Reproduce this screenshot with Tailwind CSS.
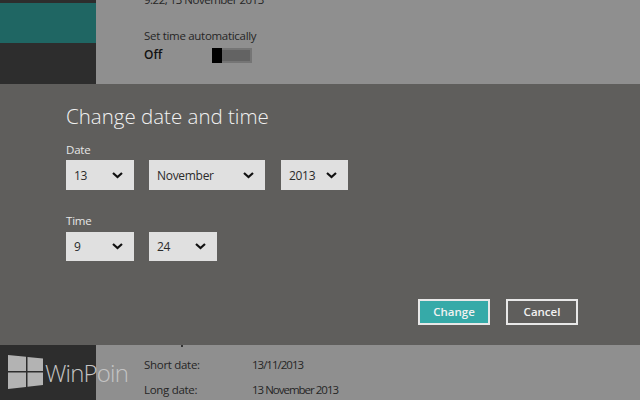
<!DOCTYPE html>
<html lang="en">
<head>
  <meta charset="UTF-8" />
  <title>Change date and time</title>
  <script src="https://cdn.jsdelivr.net/npm/@tailwindcss/browser@4"></script>
</head>
<body class="w-[640px] h-[400px] overflow-hidden bg-[#8f8f8f] font-['Open_Sans',sans-serif]">
  <!-- Settings page behind the dialog -->
  <div class="flex h-[84px]">
    <div class="w-[96px] bg-[#2d2d2d] pt-[3px]">
      <div class="h-[40px] bg-[#1f6663]"></div>
    </div>
    <div class="pl-[48px] text-[#262626] text-[11.5px] tracking-[-0.3px]">
      <p class="h-[30px] -mt-[8px] leading-[16px] tracking-[-0.5px]">9.22, 13 November 2013</p>
      <p class="mt-[6px] leading-[16px]">Set time automatically</p>
      <div class="flex items-center mt-[3px]">
        <span class="w-[68px] text-[12px] tracking-normal leading-[16px] font-semibold text-[#111]">Off</span>
        <div class="flex w-[40px] h-[15px] border-2 border-[#757575] bg-[#636363]">
          <div class="w-[10px] -m-[2px] h-[15px] shrink-0 bg-black"></div>
        </div>
      </div>
    </div>
  </div>

  <!-- Dialog -->
  <div class="h-[261px] bg-[#5f5e5c] pl-[66px] pr-[62px] pt-[19px] flex flex-col">
    <h1 class="text-[20.5px] leading-[26px] font-light text-[#f2f2f2]">Change date and time</h1>
    <p class="mt-[13px] text-[11.5px] tracking-[-0.2px] leading-[16px] text-[#e6e6e6]">Date</p>
    <div class="flex mt-[2px]">
      <div class="flex items-center justify-between w-[68px] h-[30px] pt-px pl-[8px] pr-[11px] bg-[#e0e0e0] text-[12px] tracking-[-0.3px] text-[#2b2b2b]">
        <span>13</span>
        <svg width="11" height="7" viewBox="0 0 11 7" fill="none" stroke="#111" stroke-width="2.2"><path d="M1 1l4.5 4 4.5-4" /></svg>
      </div>
      <div class="flex items-center justify-between w-[116px] h-[30px] pt-px ml-[15px] pl-[8px] pr-[11px] bg-[#e0e0e0] text-[12px] tracking-[-0.3px] text-[#2b2b2b]">
        <span>November</span>
        <svg width="11" height="7" viewBox="0 0 11 7" fill="none" stroke="#111" stroke-width="2.2"><path d="M1 1l4.5 4 4.5-4" /></svg>
      </div>
      <div class="flex items-center justify-between w-[67px] h-[30px] pt-px ml-[16px] pl-[8px] pr-[11px] bg-[#e0e0e0] text-[12px] tracking-[-0.3px] text-[#2b2b2b]">
        <span>2013</span>
        <svg width="11" height="7" viewBox="0 0 11 7" fill="none" stroke="#111" stroke-width="2.2"><path d="M1 1l4.5 4 4.5-4" /></svg>
      </div>
    </div>
    <p class="mt-[23px] text-[11.5px] tracking-[-0.2px] leading-[16px] text-[#e6e6e6]">Time</p>
    <div class="flex mt-[3px]">
      <div class="flex items-center justify-between w-[68px] h-[29px] pl-[8px] pr-[11px] bg-[#e0e0e0] text-[12px] tracking-[-0.3px] text-[#2b2b2b]">
        <span>9</span>
        <svg width="11" height="7" viewBox="0 0 11 7" fill="none" stroke="#111" stroke-width="2.2"><path d="M1 1l4.5 4 4.5-4" /></svg>
      </div>
      <div class="flex items-center justify-between w-[68px] h-[29px] ml-[15px] pl-[8px] pr-[11px] bg-[#e0e0e0] text-[12px] tracking-[-0.3px] text-[#2b2b2b]">
        <span>24</span>
        <svg width="11" height="7" viewBox="0 0 11 7" fill="none" stroke="#111" stroke-width="2.2"><path d="M1 1l4.5 4 4.5-4" /></svg>
      </div>
    </div>
    <div class="flex justify-end gap-[16px] mt-[38px]">
      <button class="w-[72px] h-[26px] border-2 border-[#e8e8e8] bg-[#36aaa8] text-[11.5px] font-semibold text-[#f2f2f2]">Change</button>
      <button class="w-[72px] h-[26px] border-2 border-[#e8e8e8] text-[11.5px] font-semibold text-[#f2f2f2]">Cancel</button>
    </div>
  </div>

  <!-- Settings page below the dialog -->
  <div class="flex h-[55px] relative">
    <div class="w-[96px] bg-[#2d2d2d]"></div>
    <div class="pl-[48px] pt-[12px] text-[11.5px] tracking-[-0.3px] leading-[16px] text-[#262626]">
      <div class="flex"><span class="w-[108px]">Short date:</span><span class="tracking-[-1px]">13/11/2013</span></div>
      <div class="flex mt-[9px]"><span class="w-[108px]">Long date:</span><span class="tracking-[-1px]">13 November 2013</span></div>
    </div>
    <!-- tail of the clipped row above -->
    <div class="absolute left-[181px] top-0 w-[2px] h-[2px] bg-[#333]"></div>
    <!-- WinPoin watermark -->
    <div class="absolute left-[8px] top-[10px] flex items-center">
      <svg width="35" height="35" viewBox="0 0 35 35" fill="#b3b3b3"><path d="M0 0l18 1.8V16H0zM19.5 2L35 3.5V16H19.5zM0 17.5h18V32L0 34zM19.5 17.5H35V30l-15.5 1.8z" /></svg>
      <span class="ml-[2px] text-[24px] leading-[30px] font-light tracking-[-0.8px] text-[#c4c4c4]">WinPoin</span>
    </div>
  </div>
</body>
</html>
